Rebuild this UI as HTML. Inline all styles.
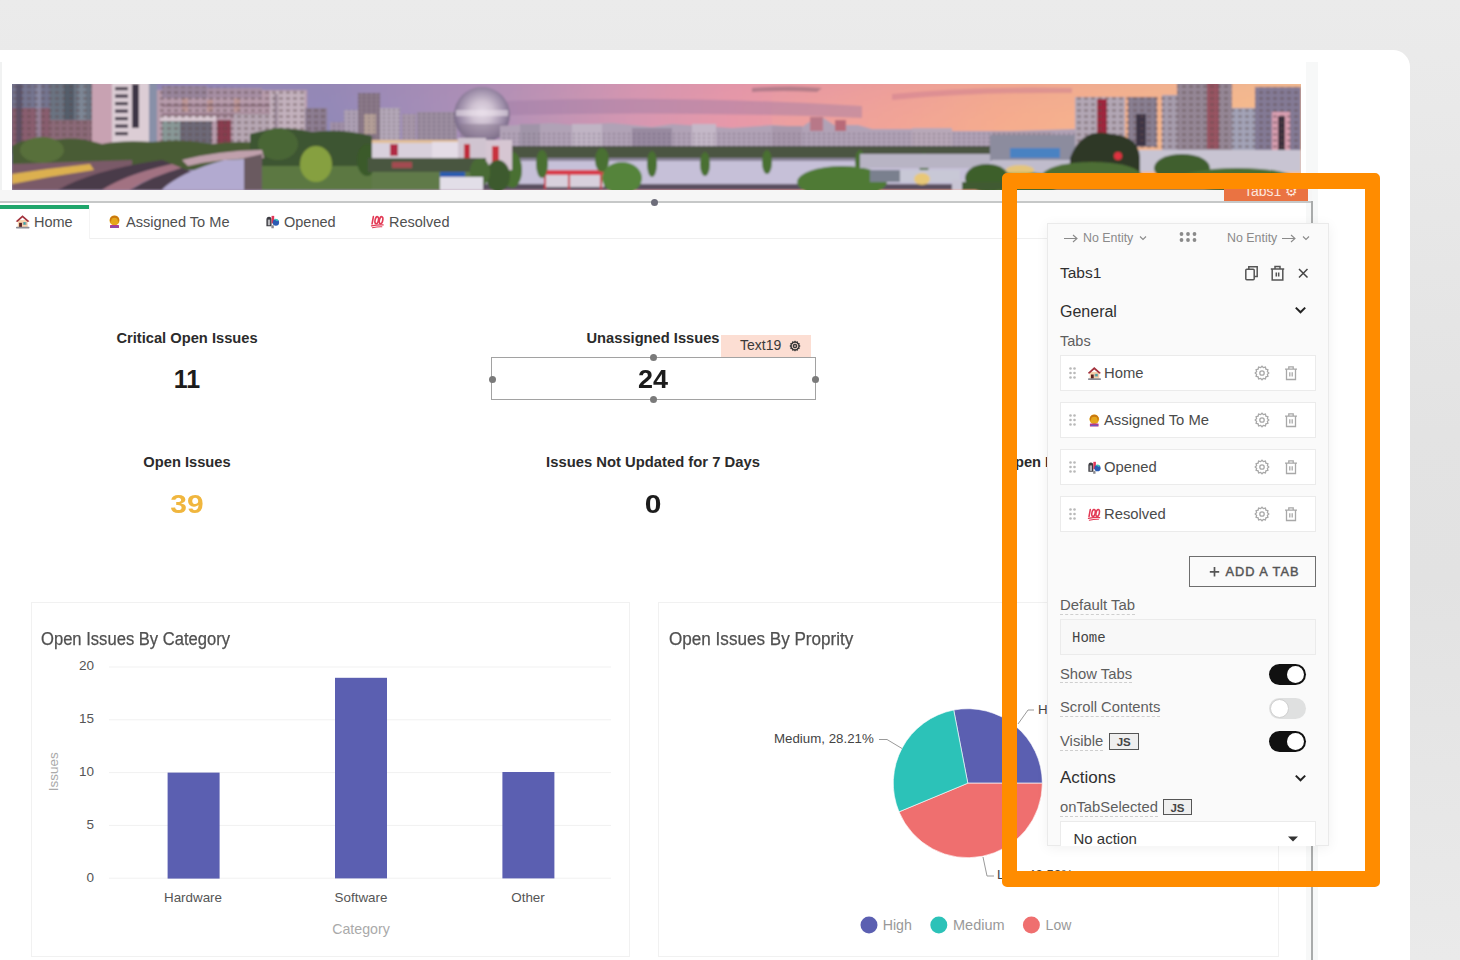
<!DOCTYPE html>
<html><head><meta charset="utf-8">
<style>
*{box-sizing:border-box;margin:0;padding:0}
html,body{width:1460px;height:960px;overflow:hidden}
body{position:relative;font-family:"Liberation Sans",sans-serif;background:linear-gradient(180deg,#ebebeb 0%,#e3e3e3 45%,#e2e2e2 60%,#eaeaea 100%)}
.a{position:absolute}
.t{position:absolute;white-space:nowrap;line-height:1}
.card{left:-20px;top:50px;width:1430px;height:940px;background:#fff;border-top-right-radius:17px}
</style></head><body>
<div class="a card"></div>
<svg width="0" height="0" style="position:absolute">
<defs>
<symbol id="e-house" viewBox="0 0 16 16">
 <rect x="3" y="6.5" width="10.5" height="7.5" fill="#f7d2ac"/>
 <path d="M0.8,7.6 L8,1.2 L15.4,7.6 L13.6,8.6 L8,3.8 L2.6,8.6 Z" fill="#a3323d"/>
 <rect x="8.4" y="8.6" width="3.8" height="3" fill="#8c9ca4"/>
 <rect x="9.6" y="8.9" width="1.2" height="2.2" fill="#2bb5a5"/>
 <rect x="4.4" y="9.4" width="3" height="4.8" fill="#5b2320"/>
 <rect x="1" y="13.6" width="14.5" height="1.8" rx="0.9" fill="#8d8d95"/>
</symbol>
<symbol id="e-person" viewBox="0 0 16 16">
 <circle cx="8" cy="7" r="5.3" fill="#e5a61b"/>
 <path d="M3,6 Q3.5,2 8,1.8 Q12.5,2 13,6 L12,9 L11,5 Q8,3 5,5 L4,9 Z" fill="#c9780f"/>
 <rect x="3.2" y="11.6" width="9.6" height="3.4" rx="0.6" fill="#b83a8a"/>
 <rect x="4" y="13.2" width="8" height="1.2" fill="#6a5ac0"/>
</symbol>
<symbol id="e-mail" viewBox="0 0 16 16">
 <path d="M1.5,13 V6 Q1.5,2.8 4.3,2.8 Q7,2.8 7,6 V13 Z" fill="#3c3c42"/>
 <rect x="3" y="6" width="2.5" height="6" fill="#b8b8bc"/>
 <rect x="7" y="2" width="2.8" height="8" fill="#e03658"/>
 <circle cx="11.6" cy="9" r="3.4" fill="#2b5bb3"/>
 <path d="M9.5,5.5 Q12,4 14.4,6.6 L13,7.6 Z" fill="#35c6b8"/>
 <rect x="6.8" y="12" width="2.6" height="3.2" fill="#8a8a90"/>
</symbol>
<symbol id="e-100" viewBox="0 0 16 16">
 <g fill="none" stroke="#e23a55" stroke-width="1.7" stroke-linecap="round">
  <path d="M3.6,2.8 L2.2,10.5"/>
  <ellipse cx="7.2" cy="6.6" rx="1.8" ry="3.8" transform="rotate(12 7.2 6.6)"/>
  <ellipse cx="11.8" cy="6.6" rx="1.8" ry="3.8" transform="rotate(12 11.8 6.6)"/>
  <path d="M1.6,12.6 Q8,11.2 14,11.6" stroke-width="1.4"/>
  <path d="M2.6,14.6 Q8,13.4 12.6,13.6" stroke-width="1.2"/>
 </g>
</symbol>
</defs></svg>

<!-- canvas left faint line -->
<div class="a" style="left:0;top:62px;width:2px;height:139px;background:#f1f2f2"></div>
<!-- scrollbar track -->
<div class="a" style="left:1306px;top:62px;width:12px;height:898px;background:#f7f8f8"></div>

<!-- BANNER -->
<svg class="a" style="left:12px;top:84px" width="1289" height="106" viewBox="0 0 1289 106">
<defs>
 <linearGradient id="sky" x1="0" y1="0" x2="1289" y2="0" gradientUnits="userSpaceOnUse">
  <stop offset="0.000" stop-color="#8784b6"/>
  <stop offset="0.247" stop-color="#8f88b9"/>
  <stop offset="0.371" stop-color="#ad90b9"/>
  <stop offset="0.487" stop-color="#d697b2"/>
  <stop offset="0.557" stop-color="#e698aa"/>
  <stop offset="0.689" stop-color="#f0a09a"/>
  <stop offset="0.766" stop-color="#f4a890"/>
  <stop offset="1.000" stop-color="#f5bf90"/>
 </linearGradient>
 <linearGradient id="skyv" x1="0" y1="0" x2="0" y2="1">
  <stop offset="0" stop-color="#c080a0" stop-opacity="0.12"/>
  <stop offset="0.5" stop-color="#ffb088" stop-opacity="0"/>
  <stop offset="1" stop-color="#ffb080" stop-opacity="0.2"/>
 </linearGradient>
 <radialGradient id="dome" cx="0.5" cy="0.45" r="0.55">
  <stop offset="0" stop-color="#e4dae6"/>
  <stop offset="0.35" stop-color="#cfc2d2"/>
  <stop offset="0.75" stop-color="#9a8aa6"/>
  <stop offset="1" stop-color="#6e607e"/>
 </radialGradient>
 <filter id="soft" x="0" y="0" width="1" height="1"><feGaussianBlur stdDeviation="0.8"/></filter>
 <linearGradient id="orng" x1="0" y1="0" x2="1" y2="1">
  <stop offset="0" stop-color="#f8b888" stop-opacity="0"/>
  <stop offset="0.5" stop-color="#f8b888" stop-opacity="0.22"/>
  <stop offset="1" stop-color="#f8c088" stop-opacity="0.4"/>
 </linearGradient>
 <pattern id="win" width="7" height="6" patternUnits="userSpaceOnUse"><rect x="1" y="1" width="4" height="3" fill="#3a2e3e" opacity="0.35"/><rect x="2" y="2" width="2" height="1" fill="#f0b070" opacity="0.25"/></pattern>
 <pattern id="winL" width="6" height="5" patternUnits="userSpaceOnUse"><rect x="1" y="1" width="3" height="2" fill="#ffffff" opacity="0.25"/></pattern>
 <pattern id="winS" width="5" height="4" patternUnits="userSpaceOnUse"><rect x="1" y="1" width="2" height="2" fill="#4a3a4e" opacity="0.3"/></pattern>
</defs>
<g filter="url(#soft)">
<rect x="-5" y="-5" width="1300" height="116" fill="url(#sky)"/>
<rect x="-5" y="-5" width="1300" height="116" fill="url(#skyv)"/>
<rect x="760" y="0" width="529" height="70" fill="url(#orng)"/>
<path d="M470,18 Q650,10 850,22 L850,34 Q650,26 470,32 Z" fill="#a07ca4" opacity="0.45"/>
<path d="M60,0 L140,0 L140,6 L60,4 Z" fill="#7a6890" opacity="0.4"/>
<path d="M740,4 Q780,1 810,4 L805,8 Q770,6 740,8 Z" fill="#806070" opacity="0.5"/>
<path d="M880,10 Q960,2 1060,4 L1060,9 Q960,8 880,16 Z" fill="#c87890" opacity="0.45"/>

<!-- ===== left towers ===== -->
<rect x="-5" y="-5" width="43" height="75" fill="#767690"/>
<rect x="0" y="24" width="38" height="40" fill="#8a5e70"/>
<rect x="4" y="0" width="6" height="60" fill="#4e4a60" opacity="0.7"/>
<rect x="24" y="0" width="5" height="60" fill="#a0a0b8" opacity="0.5"/>
<rect x="38" y="-5" width="42" height="72" fill="#6c7482"/>
<rect x="52" y="0" width="10" height="50" fill="#505a66" opacity="0.8"/>
<rect x="66" y="0" width="8" height="40" fill="#8a96a4" opacity="0.6"/>
<rect x="38" y="36" width="42" height="30" fill="#8c6a78"/>
<rect x="80" y="-5" width="20" height="75" fill="#c8a2b2"/>
<rect x="100" y="-5" width="37" height="75" fill="#dccdd5"/>
<g fill="#3e3444">
 <rect x="103" y="3" width="13" height="3.2"/><rect x="103" y="10.5" width="13" height="3.2"/><rect x="103" y="18" width="13" height="3.2"/><rect x="103" y="25.5" width="13" height="3.2"/><rect x="103" y="33" width="13" height="3.2"/><rect x="103" y="40.5" width="13" height="3.2"/><rect x="103" y="48" width="13" height="3.2"/>
 <rect x="120" y="0" width="7" height="44"/>
</g>
<rect x="137" y="-5" width="8" height="72" fill="#8890a8"/>
<!-- mid-left blocks -->
<rect x="145" y="6" width="150" height="64" fill="#b89cac"/>
<rect x="150" y="2" width="45" height="12" fill="#9a869c"/>
<rect x="195" y="4" width="55" height="10" fill="#a890a4"/>
<g fill="#c89888" opacity="0.55">
 <rect x="170" y="14" width="6" height="14"/><rect x="195" y="16" width="6" height="12"/><rect x="222" y="14" width="6" height="14"/>
</g>
<g fill="#6a4a5a" opacity="0.4">
 <rect x="150" y="20" width="140" height="3"/><rect x="150" y="29" width="140" height="3"/>
</g>
<rect x="148" y="32" width="56" height="5" fill="#dccbd4"/>
<rect x="150" y="37" width="18" height="28" fill="#8a9a98"/>
<rect x="168" y="37" width="32" height="28" fill="#6e6a78"/>
<rect x="205" y="36" width="14" height="34" fill="#8a3c50"/>
<rect x="222" y="30" width="40" height="36" fill="#b8a8b4"/>
<rect x="258" y="7" width="35" height="58" fill="#c4b2be"/>
<rect x="262" y="10" width="4" height="50" fill="#8a7888" opacity="0.6"/>
<rect x="293" y="24" width="22" height="42" fill="#8e7e92"/>
<!-- middle buildings -->
<rect x="318" y="38" width="22" height="28" fill="#a090a8"/>
<rect x="332" y="26" width="16" height="40" fill="#ada0b4"/>
<rect x="346" y="9" width="22" height="50" fill="#8a7888"/>
<rect x="352" y="30" width="12" height="20" fill="#c8b0a0" opacity="0.7"/>
<rect x="368" y="24" width="20" height="40" fill="#b4a8b8"/>
<rect x="390" y="30" width="14" height="34" fill="#a898aa"/>
<rect x="405" y="28" width="40" height="36" fill="#9c8ea0"/>
<circle cx="470" cy="31" r="28" fill="url(#dome)"/>
<rect x="444" y="26" width="52" height="6" fill="#ece4ec" opacity="0.55"/>
<rect x="448" y="40" width="44" height="14" fill="#8a7a90" opacity="0.5"/>

<!-- ===== distant skyline ===== -->
<path d="M488,42 L520,40 L540,39 L560,41 L600,39 L640,43 L660,40 L690,42 L720,44 L760,41 L790,43 L800,36 L810,33 L822,41 L846,41 L860,45 L900,45 L940,47 L1000,47 L1063,45 L1063,70 L488,70 Z" fill="#b0a2b6"/>
<rect x="508" y="40" width="20" height="28" fill="#a094a8"/>
<rect x="560" y="40" width="30" height="26" fill="#c0b4c4"/>
<rect x="620" y="44" width="40" height="22" fill="#988aa0"/>
<rect x="680" y="40" width="24" height="28" fill="#c4b8c8"/>
<rect x="798" y="33" width="13" height="14" fill="#b87888"/>
<rect x="823" y="36" width="11" height="11" fill="#b86a78"/>
<rect x="760" y="42" width="30" height="24" fill="#a898ac"/>
<rect x="900" y="44" width="40" height="22" fill="#b8a8b8"/>
<rect x="980" y="48" width="60" height="20" fill="#a898a8"/>
<rect x="470" y="62" width="593" height="12" fill="#4c5442"/>
<rect x="470" y="74" width="593" height="28" fill="#c6c0d8"/>
<rect x="470" y="74" width="593" height="3" fill="#8a8498"/>
<rect x="470" y="100" width="593" height="6" fill="#5a5060"/>
<!-- red/white structure -->
<rect x="528" y="86" width="66" height="5" fill="#d83c4c"/>
<rect x="532" y="91" width="60" height="12" fill="#d8d0dc"/>
<g fill="#c83040"><rect x="532" y="91" width="2" height="14"/><rect x="556" y="91" width="2" height="14"/><rect x="588" y="91" width="2" height="14"/></g>
<!-- poplar trees -->
<g fill="#4a7030">
 <ellipse cx="500" cy="86" rx="10" ry="18"/><ellipse cx="530" cy="80" rx="6" ry="14"/><ellipse cx="590" cy="76" rx="7" ry="12"/>
 <ellipse cx="640" cy="80" rx="5" ry="13"/><ellipse cx="693" cy="80" rx="5" ry="12"/><ellipse cx="755" cy="78" rx="5" ry="12"/>
 <ellipse cx="848" cy="78" rx="5" ry="12"/><ellipse cx="912" cy="80" rx="5" ry="11"/>
</g>
<ellipse cx="610" cy="94" rx="20" ry="16" fill="#54843a"/>
<ellipse cx="830" cy="98" rx="45" ry="16" fill="#507a34"/>
<rect x="858" y="86" width="90" height="12" fill="#c8c8d6"/>
<rect x="858" y="86" width="30" height="12" fill="#7a808e"/>
<ellipse cx="910" cy="95" rx="8" ry="6" fill="#f0c860" opacity="0.8"/>
<rect x="940" y="96" width="40" height="10" fill="#c8c4d4"/>

<rect x="0" y="0" width="80" height="60" fill="url(#win)"/>
<path d="M145,66 L145,6 L150,6 L150,2 L250,4 L250,6 L293,7 L293,24 L315,24 L315,66 Z" fill="url(#win)"/>
<path d="M318,38 L332,38 L332,26 L346,26 L346,9 L368,9 L368,24 L388,24 L388,30 L405,30 L405,28 L445,28 L445,66 L318,66 Z" fill="url(#winS)"/>
<rect x="488" y="47" width="575" height="16" fill="url(#winS)"/>
<!-- ===== left trees / park ===== -->
<path d="M0,62 Q15,52 35,58 Q60,50 90,60 Q110,56 140,58 Q170,54 200,60 Q230,56 250,60 L250,86 L0,86 Z" fill="#4a5c36"/>
<ellipse cx="30" cy="66" rx="22" ry="13" fill="#58703a"/>
<path d="M238,50 Q270,40 300,48 Q330,44 360,52 L360,106 L238,106 Z" fill="#3e5430"/>
<ellipse cx="266" cy="60" rx="20" ry="16" fill="#4a6636"/>
<rect x="238" y="82" width="130" height="24" fill="#5c7842"/>
<ellipse cx="304" cy="80" rx="16" ry="18" fill="#86a040"/>
<ellipse cx="355" cy="76" rx="10" ry="16" fill="#3a5a2a"/>
<rect x="360" y="84" width="110" height="22" fill="#607a48"/>
<!-- white/red building -->
<rect x="360" y="56" width="92" height="20" fill="#d8d0dc"/>
<rect x="360" y="56" width="92" height="3" fill="#e8b878" opacity="0.7"/>
<rect x="378" y="60" width="8" height="12" fill="#b02c44"/>
<rect x="420" y="58" width="26" height="18" fill="#e4dce6"/>
<rect x="446" y="54" width="28" height="26" fill="#d0c4d0"/>
<rect x="452" y="60" width="6" height="16" fill="#c02a3a"/>
<rect x="356" y="74" width="120" height="14" fill="#4a5640"/>
<rect x="380" y="78" width="20" height="6" fill="#c84858" opacity="0.7"/>
<rect x="474" y="56" width="26" height="30" fill="#d6c6d2"/>
<rect x="480" y="62" width="7" height="18" fill="#c8303c"/>
<ellipse cx="486" cy="92" rx="12" ry="16" fill="#3e5a2e"/>
<ellipse cx="468" cy="88" rx="10" ry="14" fill="#4a6a34"/>
<rect x="428" y="88" width="25" height="6" fill="#2a5cb0"/>
<rect x="428" y="93" width="43" height="13" fill="#e2dee8"/>
<!-- road + track -->
<path d="M0,80 L120,76 L120,106 L0,106 Z" fill="#7a5a68"/>
<path d="M0,90 Q40,84 78,80 L82,86 Q40,92 0,100 Z" fill="#dcb050"/>
<path d="M46,106 Q80,86 150,76 L160,80 Q110,92 90,106 Z" fill="#4a3a4a"/>
<path d="M90,106 Q115,90 160,80 L170,84 Q130,96 118,106 Z" fill="#a27282"/>
<path d="M118,106 Q140,92 170,84 L180,88 Q156,98 150,106 Z" fill="#4c3c4c"/>
<path d="M150,106 Q168,88 212,76 L250,74 Q240,92 232,106 Z" fill="#b2aad0"/>
<path d="M170,76 Q210,66 250,66 L252,74 Q210,74 176,82 Z" fill="#c0a0ac"/>
<path d="M232,74 L250,70 L250,106 L232,106 Z" fill="#6a5a60"/>

<!-- ===== right area ===== -->
<rect x="848" y="70" width="130" height="14" fill="#b8b4c4"/>
<rect x="978" y="51" width="95" height="26" fill="#8c8c9e"/>
<rect x="998" y="64" width="50" height="10" fill="#4a82c2"/>
<rect x="980" y="76" width="100" height="14" fill="#c0bccc"/>
<rect x="1063" y="13" width="50" height="52" fill="#b4a8b6"/>
<rect x="1085" y="15" width="10" height="34" fill="#a0283c"/>
<rect x="1116" y="13" width="29" height="50" fill="#8a8092"/>
<rect x="1124" y="30" width="10" height="32" fill="#3e3444"/>
<rect x="1150" y="11" width="18" height="58" fill="#a89eae"/>
<rect x="1165" y="-5" width="55" height="76" fill="#968896"/>
<rect x="1195" y="-5" width="12" height="70" fill="#9a4450" opacity="0.75"/>
<rect x="1220" y="24" width="23" height="46" fill="#a4a4b8"/>
<rect x="1243" y="3" width="46" height="64" fill="#857c96"/>
<rect x="1260" y="28" width="18" height="38" fill="#dca0b2"/>
<rect x="1266" y="32" width="7" height="34" fill="#3a2e3a"/>
<path d="M1063,68 L1063,13 L1145,13 L1145,11 L1165,11 L1165,0 L1220,0 L1220,24 L1243,24 L1243,3 L1289,3 L1289,68 Z" fill="url(#win)"/>
<rect x="1090" y="66" width="199" height="22" fill="#c8c4d2"/>
<path d="M1058,74 Q1070,42 1100,50 Q1130,52 1128,80 L1128,96 L1058,96 Z" fill="#2e3828"/>
<circle cx="1106" cy="72" r="4" fill="#e03040"/>
<ellipse cx="1080" cy="92" rx="50" ry="14" fill="#4e6e34"/>
<ellipse cx="1170" cy="84" rx="28" ry="14" fill="#405e2e"/>
<ellipse cx="1225" cy="96" rx="60" ry="12" fill="#4a6e30"/>
<ellipse cx="1010" cy="100" rx="40" ry="12" fill="#5a7a36"/>
<ellipse cx="975" cy="94" rx="22" ry="14" fill="#3e5e2a"/>
<rect x="950" y="98" width="339" height="8" fill="#405a30"/>
<ellipse cx="1008" cy="86" rx="14" ry="5" fill="#f0c860" opacity="0.75"/>
</g>
</svg>

<div class="a" style="left:0;top:190px;width:1312px;height:11px;background:#f6f6f6"></div>
<div class="a" style="left:0;top:201px;width:1313px;height:2px;background:#c6c8c8"></div>
<div class="a" style="left:651px;top:199px;width:7px;height:7px;border-radius:50%;background:#6d6d7a"></div>

<!-- TABS STRIP -->
<div class="a" style="left:89px;top:238px;width:1222px;height:1px;background:#efefef"></div>
<div class="a" style="left:89px;top:205px;width:1px;height:34px;background:#f4f4f4"></div>
<div class="a" style="left:0;top:205px;width:89px;height:4px;background:#1fa66b"></div>
<svg class="a" style="left:15px;top:214px" width="15" height="15"><use href="#e-house"/></svg>
<div class="t" style="left:34px;top:215px;font-size:14.5px;color:#505050">Home</div>
<svg class="a" style="left:107px;top:214px" width="15" height="15"><use href="#e-person"/></svg>
<div class="t" style="left:126px;top:215px;font-size:14.6px;color:#505050">Assigned To Me</div>
<svg class="a" style="left:265px;top:214px" width="15" height="15"><use href="#e-mail"/></svg>
<div class="t" style="left:284px;top:215px;font-size:14.5px;color:#505050">Opened</div>
<svg class="a" style="left:370px;top:214px" width="15" height="15"><use href="#e-100"/></svg>
<div class="t" style="left:389px;top:215px;font-size:14.5px;color:#505050">Resolved</div>

<!-- STATS -->
<div class="t" style="left:87px;top:330.5px;width:200px;text-align:center;font-weight:bold;font-size:14.7px;color:#2b2b2b">Critical Open Issues</div>
<div class="t" style="left:87px;top:367px;width:200px;text-align:center;font-weight:bold;font-size:25px;color:#1c1c1c">11</div>
<div class="t" style="left:553px;top:330.5px;width:200px;text-align:center;font-weight:bold;font-size:14.7px;color:#2b2b2b">Unassigned Issues</div>
<div class="t" style="left:553px;top:367px;width:200px;text-align:center;font-weight:bold;font-size:25px;color:#1c1c1c;transform:scaleX(1.08)">24</div>
<div class="t" style="left:87px;top:455px;width:200px;text-align:center;font-weight:bold;font-size:14.7px;color:#2b2b2b">Open Issues</div>
<div class="t" style="left:87px;top:491.5px;width:200px;text-align:center;font-weight:bold;font-size:25px;color:#f0b63e;transform:scaleX(1.2)">39</div>
<div class="t" style="left:503px;top:455px;width:300px;text-align:center;font-weight:bold;font-size:14.8px;color:#2b2b2b">Issues Not Updated for 7 Days</div>
<div class="t" style="left:553px;top:492px;width:200px;text-align:center;font-weight:bold;font-size:25px;color:#1c1c1c;transform:scaleX(1.2)">0</div>
<div class="t" style="left:1003.5px;top:455px;font-weight:bold;font-size:14.7px;color:#2b2b2b">Open Issues</div>

<!-- selected text widget -->
<div class="a" style="left:491px;top:357px;width:325px;height:43px;border:1.5px solid #a2a2a2"></div>
<div class="a" style="left:650px;top:354px;width:7px;height:7px;border-radius:50%;background:#7a7a7a"></div>
<div class="a" style="left:650px;top:396px;width:7px;height:7px;border-radius:50%;background:#7a7a7a"></div>
<div class="a" style="left:489px;top:376px;width:7px;height:7px;border-radius:50%;background:#7a7a7a"></div>
<div class="a" style="left:812px;top:376px;width:7px;height:7px;border-radius:50%;background:#7a7a7a"></div>
<div class="a" style="left:721px;top:335px;width:90px;height:22px;background:#fcded3"></div>
<div class="t" style="left:740px;top:338px;font-size:14px;color:#3a3a3a">Text19</div>
<svg class="a" style="left:788.5px;top:340px" width="12" height="12" viewBox="0 0 18 18"><g fill="none" stroke="#3a3a3a" stroke-width="2.2"><path d="M9,2.2 L10.4,3.6 L12.4,3.1 L12.9,5.1 L14.9,5.6 L14.4,7.6 L15.8,9 L14.4,10.4 L14.9,12.4 L12.9,12.9 L12.4,14.9 L10.4,14.4 L9,15.8 L7.6,14.4 L5.6,14.9 L5.1,12.9 L3.1,12.4 L3.6,10.4 L2.2,9 L3.6,7.6 L3.1,5.6 L5.1,5.1 L5.6,3.1 L7.6,3.6 Z"/><circle cx="9" cy="9" r="2.4"/></g></svg>

<!-- BAR CHART CARD -->
<div class="a" style="left:31px;top:602px;width:599px;height:355px;border:1px solid #f1f1f1;background:#fff"></div>
<div class="t" style="left:40.5px;top:630.3px;font-size:18px;color:#505050;transform:scaleX(0.922);transform-origin:0 0;-webkit-text-stroke:0.25px #505050">Open Issues By Category</div>
<svg class="a" style="left:31px;top:602px" width="599" height="355">
 <g stroke="#f1f1f1" stroke-width="1">
  <line x1="78" y1="65" x2="580" y2="65"/>
  <line x1="78" y1="117.8" x2="580" y2="117.8"/>
  <line x1="78" y1="170.6" x2="580" y2="170.6"/>
  <line x1="78" y1="223.4" x2="580" y2="223.4"/>
  <line x1="78" y1="276.2" x2="580" y2="276.2"/>
 </g>
 <rect x="136.6" y="170.6" width="52" height="106" fill="#5b5fb1"/>
 <rect x="304" y="75.8" width="52" height="200.6" fill="#5b5fb1"/>
 <rect x="471.4" y="170" width="52" height="106.4" fill="#5b5fb1"/>
</svg>
<div class="t" style="left:44px;top:659px;width:50px;text-align:right;font-size:13.5px;color:#555">20</div>
<div class="t" style="left:44px;top:712px;width:50px;text-align:right;font-size:13.5px;color:#555">15</div>
<div class="t" style="left:44px;top:765px;width:50px;text-align:right;font-size:13.5px;color:#555">10</div>
<div class="t" style="left:44px;top:818px;width:50px;text-align:right;font-size:13.5px;color:#555">5</div>
<div class="t" style="left:44px;top:871px;width:50px;text-align:right;font-size:13.5px;color:#555">0</div>
<div class="t" style="left:143px;top:891px;width:100px;text-align:center;font-size:13.4px;color:#555">Hardware</div>
<div class="t" style="left:311px;top:891px;width:100px;text-align:center;font-size:13.4px;color:#555">Software</div>
<div class="t" style="left:478px;top:891px;width:100px;text-align:center;font-size:13.4px;color:#555">Other</div>
<div class="t" style="left:311px;top:922px;width:100px;text-align:center;font-size:14.2px;color:#aaa">Category</div>
<div class="t" style="left:24px;top:765px;width:60px;text-align:center;font-size:13.5px;color:#aaa;transform:rotate(-90deg)">Issues</div>

<!-- PIE CHART CARD -->
<div class="a" style="left:658px;top:602px;width:621px;height:355px;border:1px solid #f1f1f1;background:#fff"></div>
<div class="t" style="left:669px;top:630.3px;font-size:18px;color:#505050;transform:scaleX(0.95);transform-origin:0 0;-webkit-text-stroke:0.25px #505050">Open Issues By Proprity</div>
<svg class="a" style="left:0;top:0;overflow:visible" width="1460" height="960">
 <path fill="#5b5fb1" stroke="#fff" stroke-width="0.6" stroke-linejoin="round" d="M967.8,783.2 L953.71,710.04 A74.5,74.5 0 0 1 1042.30,783.20 Z"/>
 <path fill="#ef6f6f" stroke="#fff" stroke-width="0.6" stroke-linejoin="round" d="M967.8,783.2 L1042.30,783.20 A74.5,74.5 0 0 1 899.02,811.83 Z"/>
 <path fill="#2cc2b8" stroke="#fff" stroke-width="0.6" stroke-linejoin="round" d="M967.8,783.2 L899.02,811.83 A74.5,74.5 0 0 1 953.71,710.04 Z"/>
 <g fill="none" stroke="#9a9a9a" stroke-width="1">
  <polyline points="879,739.5 887,739.5 902,748.5"/>
  <polyline points="1018,724 1028,710 1034,710"/>
  <polyline points="983,857 987,876 994,876"/>
 </g>
 <circle cx="869" cy="925" r="8.5" fill="#5b5fb1"/>
 <circle cx="938.8" cy="925" r="8.5" fill="#2cc2b8"/>
 <circle cx="1031.4" cy="925" r="8.5" fill="#ef6f6f"/>
</svg>
<div class="t" style="left:774px;top:732px;font-size:13.3px;color:#444">Medium, 28.21%</div>
<div class="t" style="left:1038px;top:703px;font-size:13.3px;color:#444">High, 28.21%</div>
<div class="t" style="left:997px;top:868px;font-size:13.3px;color:#444">Low, 43.59%</div>
<div class="t" style="left:882.7px;top:918px;font-size:14.2px;color:#999">High</div>
<div class="t" style="left:953px;top:918px;font-size:14.5px;color:#999">Medium</div>
<div class="t" style="left:1045.6px;top:918px;font-size:14px;color:#999">Low</div>

<!-- TABS WIDGET OUTLINE -->
<div class="a" style="left:1311px;top:201px;width:2px;height:759px;background:#a9abab"></div>
<div class="a" style="left:1224px;top:178px;width:84px;height:23px;background:#ea7342"></div>
<div class="t" style="left:1244px;top:184px;font-size:14px;color:#fde6da">Tabs1 &#9881;</div>

<!-- PROPERTY PANE -->
<div class="a" id="pane" style="left:1047px;top:223px;width:282px;height:623px;background:#fafafa;border:1px solid #eaeaea;box-shadow:0 2px 12px rgba(0,0,0,0.06)"></div>
<div class="a" style="left:1047px;top:223px;width:282px;height:623px;overflow:hidden">
<div style="position:absolute;left:-1047px;top:-223px;width:1460px;height:960px">
<!-- header row -->
<svg class="a" style="left:1063px;top:232px" width="16" height="12"><path d="M1,6.5 H14 M10,3 L14,6.5 L10,10" fill="none" stroke="#8a8a8a" stroke-width="1.1"/></svg>
<div class="t" style="left:1083px;top:232px;font-size:12.4px;color:#8a8a8a">No Entity</div>
<svg class="a" style="left:1139px;top:235px" width="8" height="6"><path d="M1,1.5 L4,4.5 L7,1.5" fill="none" stroke="#8a8a8a" stroke-width="1.1"/></svg>
<svg class="a" style="left:1179px;top:231px" width="18" height="12"><g fill="#8a8a8a"><circle cx="2.5" cy="3" r="1.9"/><circle cx="9" cy="3" r="1.9"/><circle cx="15.5" cy="3" r="1.9"/><circle cx="2.5" cy="9" r="1.9"/><circle cx="9" cy="9" r="1.9"/><circle cx="15.5" cy="9" r="1.9"/></g></svg>
<div class="t" style="left:1227px;top:232px;font-size:12.4px;color:#8a8a8a">No Entity</div>
<svg class="a" style="left:1281px;top:232px" width="16" height="12"><path d="M1,6.5 H14 M10,3 L14,6.5 L10,10" fill="none" stroke="#8a8a8a" stroke-width="1.1"/></svg>
<svg class="a" style="left:1302px;top:235px" width="8" height="6"><path d="M1,1.5 L4,4.5 L7,1.5" fill="none" stroke="#8a8a8a" stroke-width="1.1"/></svg>
<!-- title -->
<div class="t" style="left:1060px;top:265px;font-size:15.5px;color:#2f2f2f">Tabs1</div>
<svg class="a" style="left:1243px;top:264px" width="17" height="18"><g fill="none" stroke="#555" stroke-width="1.5"><rect x="2.8" y="5.3" width="8.4" height="10.4" rx="1"/><path d="M5.8,5.3 V2.8 H14.2 V12.6 H11.2"/></g></svg>
<svg class="a" style="left:1269px;top:264px" width="17" height="18"><g fill="none" stroke="#555" stroke-width="1.5"><path d="M1.8,5 H15.2 M3.2,5 V16 H13.8 V5 M6,5 V2.6 H11 V5 M7.3,8.5 V12.6 M9.7,8.5 V12.6"/></g></svg>
<svg class="a" style="left:1297px;top:267px" width="12" height="12"><path d="M2,2 L10.5,10.5 M10.5,2 L2,10.5" fill="none" stroke="#444" stroke-width="1.5"/></svg>
<div class="t" style="left:1060px;top:303.5px;font-size:16px;color:#2f2f2f">General</div>
<svg class="a" style="left:1294px;top:305px" width="13" height="10"><path d="M1.8,2.6 L6.5,7.3 L11.2,2.6" fill="none" stroke="#222" stroke-width="2"/></svg>
<div class="t" style="left:1060px;top:334px;font-size:14.5px;color:#5e5e5e">Tabs</div>
<div class="a" style="left:1060px;top:355px;width:256px;height:36px;background:#fff;border:1px solid #ebebeb"></div>
<svg class="a" style="left:1068px;top:366px" width="10" height="14"><g fill="#b9b9b9"><circle cx="2.5" cy="2.5" r="1.3"/><circle cx="6.5" cy="2.5" r="1.3"/><circle cx="2.5" cy="7" r="1.3"/><circle cx="6.5" cy="7" r="1.3"/><circle cx="2.5" cy="11.5" r="1.3"/><circle cx="6.5" cy="11.5" r="1.3"/></g></svg>
<svg class="a" style="left:1086.5px;top:366px" width="14.5" height="14.5" viewBox="0 0 16 16"><use href="#e-house"/></svg>
<div class="t" style="left:1104px;top:366px;font-size:14.8px;color:#4a4a4a">Home</div>
<svg class="a" style="left:1253px;top:364px" width="18" height="18"><g fill="none" stroke="#a8a8a8" stroke-width="1.3"><path d="M9,2.2 L10.4,3.6 L12.4,3.1 L12.9,5.1 L14.9,5.6 L14.4,7.6 L15.8,9 L14.4,10.4 L14.9,12.4 L12.9,12.9 L12.4,14.9 L10.4,14.4 L9,15.8 L7.6,14.4 L5.6,14.9 L5.1,12.9 L3.1,12.4 L3.6,10.4 L2.2,9 L3.6,7.6 L3.1,5.6 L5.1,5.1 L5.6,3.1 L7.6,3.6 Z"/><circle cx="9" cy="9" r="2.2"/></g></svg>
<svg class="a" style="left:1283px;top:365px" width="16" height="16"><g fill="none" stroke="#a8a8a8" stroke-width="1.3"><path d="M2,4.2 H14 M3.5,4.2 V14.5 H12.5 V4.2 M5.8,4.2 V1.8 H10.2 V4.2 M6.8,7.2 V11.5 M9.2,7.2 V11.5"/></g></svg>
<div class="a" style="left:1060px;top:402px;width:256px;height:36px;background:#fff;border:1px solid #ebebeb"></div>
<svg class="a" style="left:1068px;top:413px" width="10" height="14"><g fill="#b9b9b9"><circle cx="2.5" cy="2.5" r="1.3"/><circle cx="6.5" cy="2.5" r="1.3"/><circle cx="2.5" cy="7" r="1.3"/><circle cx="6.5" cy="7" r="1.3"/><circle cx="2.5" cy="11.5" r="1.3"/><circle cx="6.5" cy="11.5" r="1.3"/></g></svg>
<svg class="a" style="left:1086.5px;top:413px" width="14.5" height="14.5" viewBox="0 0 16 16"><use href="#e-person"/></svg>
<div class="t" style="left:1104px;top:413px;font-size:14.8px;color:#4a4a4a">Assigned To Me</div>
<svg class="a" style="left:1253px;top:411px" width="18" height="18"><g fill="none" stroke="#a8a8a8" stroke-width="1.3"><path d="M9,2.2 L10.4,3.6 L12.4,3.1 L12.9,5.1 L14.9,5.6 L14.4,7.6 L15.8,9 L14.4,10.4 L14.9,12.4 L12.9,12.9 L12.4,14.9 L10.4,14.4 L9,15.8 L7.6,14.4 L5.6,14.9 L5.1,12.9 L3.1,12.4 L3.6,10.4 L2.2,9 L3.6,7.6 L3.1,5.6 L5.1,5.1 L5.6,3.1 L7.6,3.6 Z"/><circle cx="9" cy="9" r="2.2"/></g></svg>
<svg class="a" style="left:1283px;top:412px" width="16" height="16"><g fill="none" stroke="#a8a8a8" stroke-width="1.3"><path d="M2,4.2 H14 M3.5,4.2 V14.5 H12.5 V4.2 M5.8,4.2 V1.8 H10.2 V4.2 M6.8,7.2 V11.5 M9.2,7.2 V11.5"/></g></svg>
<div class="a" style="left:1060px;top:449px;width:256px;height:36px;background:#fff;border:1px solid #ebebeb"></div>
<svg class="a" style="left:1068px;top:460px" width="10" height="14"><g fill="#b9b9b9"><circle cx="2.5" cy="2.5" r="1.3"/><circle cx="6.5" cy="2.5" r="1.3"/><circle cx="2.5" cy="7" r="1.3"/><circle cx="6.5" cy="7" r="1.3"/><circle cx="2.5" cy="11.5" r="1.3"/><circle cx="6.5" cy="11.5" r="1.3"/></g></svg>
<svg class="a" style="left:1086.5px;top:460px" width="14.5" height="14.5" viewBox="0 0 16 16"><use href="#e-mail"/></svg>
<div class="t" style="left:1104px;top:460px;font-size:14.8px;color:#4a4a4a">Opened</div>
<svg class="a" style="left:1253px;top:458px" width="18" height="18"><g fill="none" stroke="#a8a8a8" stroke-width="1.3"><path d="M9,2.2 L10.4,3.6 L12.4,3.1 L12.9,5.1 L14.9,5.6 L14.4,7.6 L15.8,9 L14.4,10.4 L14.9,12.4 L12.9,12.9 L12.4,14.9 L10.4,14.4 L9,15.8 L7.6,14.4 L5.6,14.9 L5.1,12.9 L3.1,12.4 L3.6,10.4 L2.2,9 L3.6,7.6 L3.1,5.6 L5.1,5.1 L5.6,3.1 L7.6,3.6 Z"/><circle cx="9" cy="9" r="2.2"/></g></svg>
<svg class="a" style="left:1283px;top:459px" width="16" height="16"><g fill="none" stroke="#a8a8a8" stroke-width="1.3"><path d="M2,4.2 H14 M3.5,4.2 V14.5 H12.5 V4.2 M5.8,4.2 V1.8 H10.2 V4.2 M6.8,7.2 V11.5 M9.2,7.2 V11.5"/></g></svg>
<div class="a" style="left:1060px;top:496px;width:256px;height:36px;background:#fff;border:1px solid #ebebeb"></div>
<svg class="a" style="left:1068px;top:507px" width="10" height="14"><g fill="#b9b9b9"><circle cx="2.5" cy="2.5" r="1.3"/><circle cx="6.5" cy="2.5" r="1.3"/><circle cx="2.5" cy="7" r="1.3"/><circle cx="6.5" cy="7" r="1.3"/><circle cx="2.5" cy="11.5" r="1.3"/><circle cx="6.5" cy="11.5" r="1.3"/></g></svg>
<svg class="a" style="left:1086.5px;top:507px" width="14.5" height="14.5" viewBox="0 0 16 16"><use href="#e-100"/></svg>
<div class="t" style="left:1104px;top:507px;font-size:14.8px;color:#4a4a4a">Resolved</div>
<svg class="a" style="left:1253px;top:505px" width="18" height="18"><g fill="none" stroke="#a8a8a8" stroke-width="1.3"><path d="M9,2.2 L10.4,3.6 L12.4,3.1 L12.9,5.1 L14.9,5.6 L14.4,7.6 L15.8,9 L14.4,10.4 L14.9,12.4 L12.9,12.9 L12.4,14.9 L10.4,14.4 L9,15.8 L7.6,14.4 L5.6,14.9 L5.1,12.9 L3.1,12.4 L3.6,10.4 L2.2,9 L3.6,7.6 L3.1,5.6 L5.1,5.1 L5.6,3.1 L7.6,3.6 Z"/><circle cx="9" cy="9" r="2.2"/></g></svg>
<svg class="a" style="left:1283px;top:506px" width="16" height="16"><g fill="none" stroke="#a8a8a8" stroke-width="1.3"><path d="M2,4.2 H14 M3.5,4.2 V14.5 H12.5 V4.2 M5.8,4.2 V1.8 H10.2 V4.2 M6.8,7.2 V11.5 M9.2,7.2 V11.5"/></g></svg>

<!-- add tab -->
<div class="a" style="left:1189px;top:556px;width:127px;height:31px;border:1.5px solid #6e6e6e;background:#fafafa"></div>
<svg class="a" style="left:1208.5px;top:566px" width="12" height="12"><path d="M5.5,1 V10.5 M0.8,5.8 H10.2" stroke="#555" stroke-width="1.7"/></svg>
<div class="t" style="left:1225.5px;top:566px;font-size:12.8px;letter-spacing:1px;color:#555;-webkit-text-stroke:0.45px #555">ADD A TAB</div>
<div class="t" style="left:1060px;top:598px;font-size:14.9px;color:#5e5e5e;border-bottom:1px dashed #cfcfcf;padding-bottom:1px;line-height:14.9px">Default Tab</div>
<div class="a" style="left:1060px;top:619px;width:256px;height:36px;border:1px solid #ebebeb;background:#f8f8f8"></div>
<div class="t" style="left:1072px;top:631px;font-family:'Liberation Mono',monospace;font-size:14px;color:#444">Home</div>
<div class="t" style="left:1060px;top:666.5px;font-size:14.8px;color:#5e5e5e;border-bottom:1px dashed #cfcfcf;padding-bottom:1px;line-height:14.8px">Show Tabs</div>
<div class="a" style="left:1268.5px;top:663.5px;width:37px;height:21px;border-radius:11px;background:#111"></div>
<div class="a" style="left:1286.5px;top:665.5px;width:17px;height:17px;border-radius:50%;background:#fff"></div>
<div class="t" style="left:1060px;top:700px;font-size:14.8px;color:#5e5e5e;border-bottom:1px dashed #cfcfcf;padding-bottom:1px;line-height:14.8px">Scroll Contents</div>
<div class="a" style="left:1268.5px;top:698px;width:37px;height:21px;border-radius:11px;background:#dfe0e0"></div>
<div class="a" style="left:1269.5px;top:699px;width:19px;height:19px;border-radius:50%;background:#fff;border:1px solid #d0d0d0"></div>
<div class="t" style="left:1060px;top:734px;font-size:14.8px;color:#5e5e5e;border-bottom:1px dashed #cfcfcf;padding-bottom:1px;line-height:14.8px">Visible</div>
<div class="a" style="left:1109px;top:733px;width:29.5px;height:17px;border:1.5px solid #555;background:#efefef"></div>
<div class="t" style="left:1109px;top:737px;width:29.5px;text-align:center;font-size:11.5px;font-weight:bold;color:#444">JS</div>
<div class="a" style="left:1268.5px;top:731px;width:37px;height:21px;border-radius:11px;background:#111"></div>
<div class="a" style="left:1286.5px;top:733px;width:17px;height:17px;border-radius:50%;background:#fff"></div>
<div class="t" style="left:1060px;top:769px;font-size:17px;color:#2f2f2f">Actions</div>
<svg class="a" style="left:1294px;top:773px" width="13" height="10"><path d="M1.8,2.6 L6.5,7.3 L11.2,2.6" fill="none" stroke="#222" stroke-width="2"/></svg>
<div class="t" style="left:1060px;top:800px;font-size:14.8px;color:#5e5e5e;border-bottom:1px dashed #cfcfcf;padding-bottom:1px;line-height:14.8px">onTabSelected</div>
<div class="a" style="left:1163px;top:799px;width:29px;height:16px;border:1.5px solid #555;background:#efefef"></div>
<div class="t" style="left:1163px;top:802.5px;width:29px;text-align:center;font-size:11.5px;font-weight:bold;color:#444">JS</div>
<div class="a" style="left:1060px;top:821px;width:256px;height:36px;border:1px solid #ebebeb;background:#fff"></div>
<div class="t" style="left:1073.5px;top:831px;font-size:15px;color:#333">No action</div>
<svg class="a" style="left:1287px;top:836px" width="12" height="6"><path d="M1,0.5 H11 L6,5.5 Z" fill="#333"/></svg>
</div></div>

<!-- ORANGE ANNOTATION -->
<div class="a" style="left:1002px;top:173px;width:378px;height:714px;border:solid #ff8c00;border-width:16px 15.5px 16px 15.5px;border-radius:5px"></div>

</body></html>
